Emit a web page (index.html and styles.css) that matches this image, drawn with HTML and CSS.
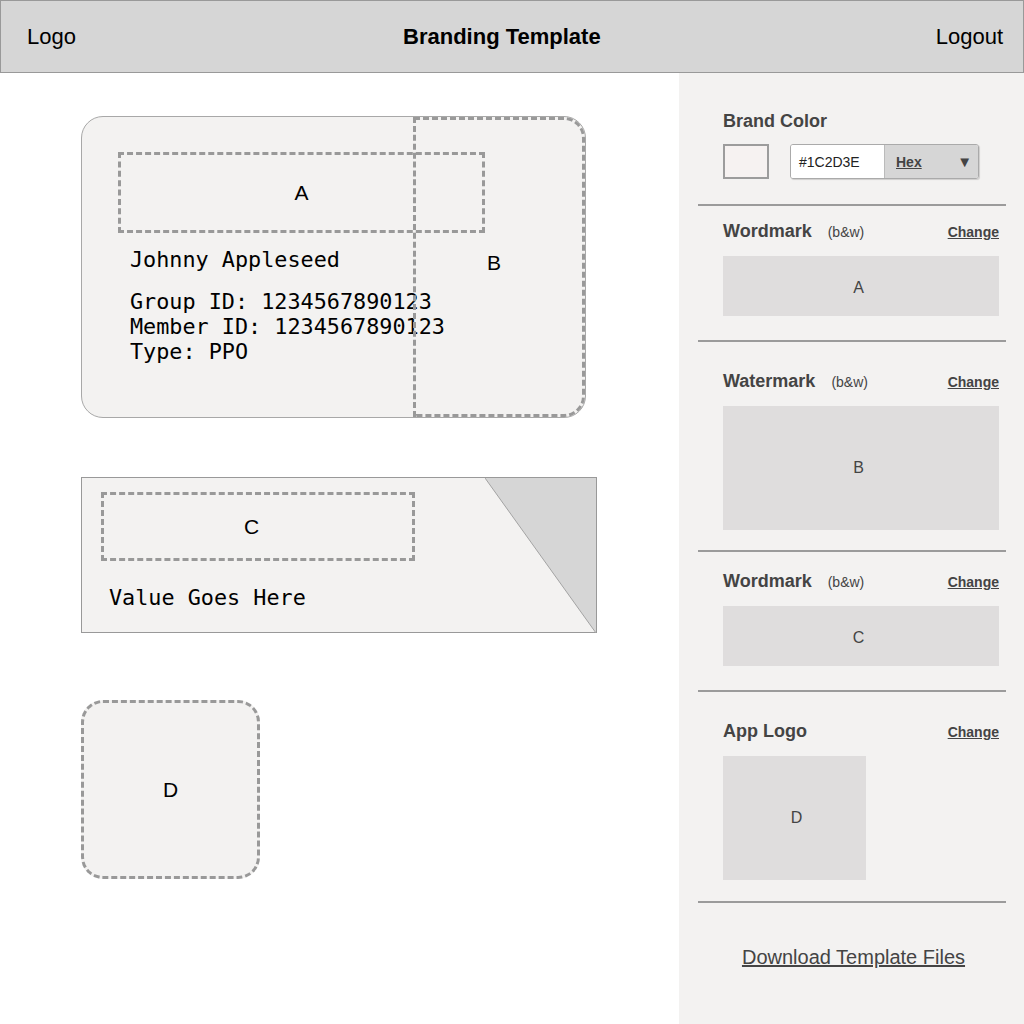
FILE: index.html
```html
<!DOCTYPE html>
<html lang="en">
<head>
<meta charset="utf-8">
<title>Branding Template</title>
<link rel="stylesheet" href="styles.css">
</head>
<body>
<header class="topbar">
  <span class="topbar-link">Logo</span>
  <span class="topbar-title">Branding Template</span>
  <span class="topbar-link">Logout</span>
</header>
<div class="layout">
  <main class="canvas">
    <div class="card id-card">
      <div class="zone zone-a">A</div>
      <div class="mono holder">Johnny Appleseed</div>
      <div class="mono ids">Group ID: 1234567890123<br>Member ID: 1234567890123<br>Type: PPO</div>
      <div class="zone zone-b"><span>B</span></div>
    </div>
    <div class="card value-card">
      <div class="zone zone-c">C</div>
      <div class="mono value">Value Goes Here</div>
      <svg class="corner" width="111" height="155" viewBox="0 0 111 155">
        <polygon points="0,0 111,0 111,155" fill="#d6d6d6"/>
        <line x1="0" y1="0" x2="111" y2="155" stroke="#a3a3a3" stroke-width="1"/>
      </svg>
    </div>
    <div class="zone app-icon">D</div>
  </main>
  <aside class="panel">
    <section class="group group-color">
      <div class="group-head"><span class="group-title">Brand Color</span></div>
      <div class="color-row">
        <div class="swatch"></div>
        <div class="color-input">
          <span class="hex-field">#1C2D3E</span>
          <span class="hex-select"><span class="hex-label">Hex</span><span class="caret">▼</span></span>
        </div>
      </div>
    </section>
    <section class="group group-a">
      <div class="group-head"><span class="group-title">Wordmark</span><span class="group-note">(b&amp;w)</span><span class="change">Change</span></div>
      <div class="preview preview-short">A</div>
    </section>
    <section class="group group-b">
      <div class="group-head"><span class="group-title">Watermark</span><span class="group-note">(b&amp;w)</span><span class="change">Change</span></div>
      <div class="preview preview-tall">B</div>
    </section>
    <section class="group group-c">
      <div class="group-head"><span class="group-title">Wordmark</span><span class="group-note">(b&amp;w)</span><span class="change">Change</span></div>
      <div class="preview preview-short">C</div>
    </section>
    <section class="group group-d">
      <div class="group-head"><span class="group-title">App Logo</span><span class="change">Change</span></div>
      <div class="preview preview-tall preview-square">D</div>
    </section>
    <div class="download"><span class="download-link">Download Template Files</span></div>
  </aside>
</div>
</body>
</html>
```
FILE: styles.css
```css
* { box-sizing: border-box; }
html, body { margin: 0; padding: 0; }
body {
  font-family: "Liberation Sans", Arial, sans-serif;
  color: #000;
  background: #fff;
  width: 1024px;
}

.topbar {
  height: 73px;
  display: flex;
  align-items: center;
  justify-content: space-between;
  padding: 0 20px 0 26px;
  background: #d6d6d6;
  border: 1px solid #999;
  font-size: 22px;
}
.topbar-title { font-weight: bold; margin-right: 8px; }

.layout { display: flex; }
.canvas {
  flex: 1;
  padding: 43px 0 0 81px;
  display: flex;
  flex-direction: column;
  align-items: flex-start;
}

.card {
  position: relative;
  background: #f3f2f1;
}
.zone {
  border: 3px dashed #999;
  display: flex;
  align-items: center;
  justify-content: center;
  font-size: 21px;
}
.mono {
  font-family: "DejaVu Sans Mono", "Liberation Mono", monospace;
  font-size: 21.8px;
  line-height: 25px;
}

.id-card {
  width: 505px;
  height: 302px;
  border: 1px solid #a8a8a8;
  border-radius: 22px;
  padding: 35px 0 0 36px;
}
.zone-a { width: 367px; height: 81px; }
.holder { margin-top: 14px; padding-left: 12px; }
.ids { margin-top: 17px; padding-left: 12px; }
.zone-b {
  position: absolute;
  top: 0;
  bottom: 0;
  right: 0;
  width: 172px;
  border-radius: 0 21px 21px 0;
  padding: 0 10px 9px 0;
}

.value-card {
  margin-top: 59px;
  width: 516px;
  height: 156px;
  border: 1px solid #999;
  padding: 14px 0 0 19px;
}
.zone-c { width: 314px; height: 69px; padding-right: 13px; }
.value { margin-top: 24px; padding-left: 8px; }
.corner { position: absolute; top: 0; right: 0; display: block; }

.app-icon {
  margin-top: 67px;
  width: 179px;
  height: 179px;
  border-radius: 22px;
  background: #f3f2f1;
}

.panel {
  width: 345px;
  flex: none;
  min-height: 951px;
  background: #f3f2f1;
  padding: 0 18px 0 19px;
  color: #444;
}
.group {
  border-bottom: 2px solid #9b9b9b;
  padding-left: 25px;
  padding-right: 7px;
}
.group-head {
  display: flex;
  align-items: baseline;
  height: 20px;
  line-height: 20px;
}
.group-title { font-size: 18px; font-weight: bold; }
.group-note { font-size: 14px; margin-left: 16px; }
.change {
  margin-left: auto;
  font-size: 14px;
  font-weight: bold;
  text-decoration: underline;
}

.group-color { padding-top: 38px; padding-bottom: 25px; }
.color-row { display: flex; align-items: center; margin-top: 13px; gap: 21px; }
.swatch {
  width: 46px;
  height: 35px;
  border: 2px solid #9c9c9c;
  background: #f6f2f1;
}
.color-input {
  display: flex;
  width: 189px;
  height: 35px;
  border: 1px solid #aaa;
  border-radius: 3px;
  overflow: hidden;
  font-size: 14px;
  box-shadow: 1px 1px 1px rgba(0,0,0,0.15);
}
.hex-field {
  width: 93px;
  background: #fff;
  color: #222;
  padding-left: 8px;
  display: flex;
  align-items: center;
}
.hex-select {
  flex: 1;
  background: #d6d6d6;
  border-left: 1px solid #bbb;
  display: flex;
  align-items: center;
  padding: 0 6px 0 11px;
  color: #444;
}
.hex-label { font-weight: bold; text-decoration: underline; }
.caret { margin-left: auto; font-size: 15px; color: #444; }

.preview {
  margin-top: 15px;
  background: #dfdddd;
  display: flex;
  align-items: center;
  justify-content: center;
  font-size: 16px;
  color: #444;
  height: 60px;
  padding: 3px 5px 0 0;
}
.preview-tall { height: 124px; padding-top: 0; }
.preview-square { width: 143px; padding: 0 0 0 4px; }

.group-a { padding-top: 15px; padding-bottom: 24px; }
.group-b { padding-top: 29px; padding-bottom: 20px; }
.group-c { padding-top: 19px; padding-bottom: 24px; }
.group-d { padding-top: 29px; padding-bottom: 21px; }

.download {
  margin-top: 42px;
  text-align: center;
  padding-left: 3px;
  font-size: 20px;
  line-height: 24px;
}
.download-link { text-decoration: underline; }
```
